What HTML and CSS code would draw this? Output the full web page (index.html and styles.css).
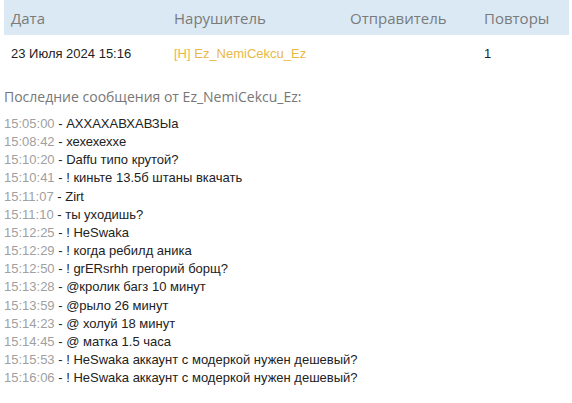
FILE: index.html
```html
<!DOCTYPE html>
<html lang="ru">
<head>
<meta charset="utf-8">
<link rel="stylesheet" href="styles.css">
</head>
<body>
<div class="page">
  <table class="tbl">
    <thead>
      <tr>
        <th class="c1">Дата</th>
        <th class="c2">Нарушитель</th>
        <th class="c3">Отправитель</th>
        <th class="c4">Повторы</th>
      </tr>
    </thead>
    <tbody>
      <tr>
        <td>23 Июля 2024 15:16</td>
        <td class="nick">[H] Ez_NemiCekcu_Ez</td>
        <td></td>
        <td>1</td>
      </tr>
    </tbody>
  </table>
  <div class="title">Последние сообщения от Ez_NemiCekcu_Ez:</div>
  <div class="log">
    <div><span class="t">15:05:00</span> - АХХАХАВХАВЗЫа</div>
    <div><span class="t">15:08:42</span> - хехехехxе</div>
    <div><span class="t">15:10:20</span> - Daffu типо крутой?</div>
    <div><span class="t">15:10:41</span> - ! киньте 13.5б штаны вкачать</div>
    <div><span class="t">15:11:07</span> - Zirt</div>
    <div><span class="t">15:11:10</span> - ты уходишь?</div>
    <div><span class="t">15:12:25</span> - ! HeSwaka</div>
    <div><span class="t">15:12:29</span> - ! когда ребилд аника</div>
    <div><span class="t">15:12:50</span> - ! grERsrhh грегорий борщ?</div>
    <div><span class="t">15:13:28</span> - @кролик багз 10 минут</div>
    <div><span class="t">15:13:59</span> - @рыло 26 минут</div>
    <div><span class="t">15:14:23</span> - @ холуй 18 минут</div>
    <div><span class="t">15:14:45</span> - @ матка 1.5 часа</div>
    <div><span class="t">15:15:53</span> - ! HeSwaka аккаунт с модеркой нужен дешевый?</div>
    <div><span class="t">15:16:06</span> - ! HeSwaka аккаунт с модеркой нужен дешевый?</div>
  </div>
</div>
</body>
</html>
```

FILE: styles.css
```css
html, body {
  margin: 0;
  padding: 0;
  background: #fff;
}
.page {
  padding: 0 3px 0 4px;
}
.tbl {
  width: 100%;
  border-collapse: collapse;
}
.tbl th {
  background: #dbe9f5;
  font-family: "Open Sans", sans-serif;
  font-weight: 400;
  font-size: 15px;
  color: #7a7a7a;
  text-align: left;
  height: 35px;
  padding: 0 0 0 7px;
  vertical-align: middle;
}
.tbl th.c1 { width: 156px; }
.tbl th.c2 { width: 169px; }
.tbl th.c3 { width: 127px; }
.tbl td {
  font-family: "Liberation Sans", Arial, sans-serif;
  font-size: 13px;
  color: #222;
  height: 36px;
  padding: 0 0 0 7px;
  vertical-align: middle;
}
.tbl td.nick {
  color: #e9b845;
}
.title {
  font-family: "Open Sans", sans-serif;
  font-size: 14px;
  color: #777;
  margin-top: 16px;
  margin-bottom: 9px;
}
.log {
  font-family: "Liberation Sans", Arial, sans-serif;
  font-size: 13px;
  line-height: 18.15px;
  color: #222;
}
.log .t {
  color: #a0a0a0;
}
```
